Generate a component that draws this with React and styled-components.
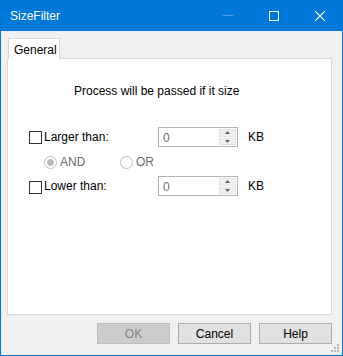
import styled, { createGlobalStyle } from "styled-components";

const Global = createGlobalStyle`
  html, body {
    margin: 0;
    padding: 0;
    background: #f0f0f0;
  }
  * {
    box-sizing: border-box;
  }
`;

const Window = styled.div`
  width: 343px;
  height: 356px;
  display: flex;
  flex-direction: column;
  border: 1px solid #0078d7;
  border-top: none;
  background: #f0f0f0;
  font-family: "Liberation Sans", Arial, sans-serif;
  font-size: 12px;
  color: #000;
  position: relative;
`;

const TitleBar = styled.div`
  height: 31px;
  margin: 0 -1px;
  background: #0078d7;
  color: #fff;
  display: flex;
  align-items: center;
  padding-left: 10px;
`;

const Title = styled.div`
  flex: 1;
  font-size: 12px;
`;

const CaptionButton = styled.div`
  width: 46px;
  height: 31px;
  display: flex;
  align-items: center;
  justify-content: center;
`;

const Body = styled.div`
  flex: 1;
  display: flex;
  flex-direction: column;
  padding: 7px 10px 0 6px;
`;

const TabStrip = styled.div`
  display: flex;
  padding-left: 1px;
  height: 20px;
`;

const Tab = styled.div`
  width: 52px;
  height: 21px;
  background: #fff;
  border: 1px solid #d9d9d9;
  border-bottom: none;
  padding: 4px 0 0 5px;
  position: relative;
  z-index: 1;
`;

const Panel = styled.div`
  height: 257px;
  background: #fff;
  border: 1px solid #d9d9d9;
  padding: 25px 0 0 21px;
`;

const Heading = styled.div`
  padding-left: 45px;
  line-height: 15px;
  margin-bottom: 28px;
`;

const Row = styled.div`
  display: flex;
  align-items: center;
  height: 20px;
  margin-bottom: ${(p) => p.$gap || 0}px;
`;

const CheckLabel = styled.label`
  width: 129px;
  display: flex;
  align-items: center;
  gap: 2px;
`;

const Box = styled.span`
  width: 13px;
  height: 13px;
  border: 1px solid #333;
  background: #fff;
  display: inline-block;
  margin-top: ${(p) => p.$shift || 0}px;
`;

const Spin = styled.div`
  width: 80px;
  height: 20px;
  border: 1px solid #b4b4b4;
  display: flex;
  align-items: stretch;
`;

const SpinValue = styled.div`
  flex: 1;
  padding: 3px 0 0 4px;
  color: #6d6d6d;
`;

const SpinButtons = styled.div`
  width: 17px;
  margin: 1px 1px 1px 0;
  display: flex;
  flex-direction: column;
  gap: 1px;
`;

const SpinArrow = styled.div`
  flex: 1;
  background: #f0f0f0;
  border: 1px solid #e3e3e3;
  display: flex;
  align-items: center;
  justify-content: center;
`;

const Unit = styled.span`
  margin-left: 10px;
`;

const RadioRow = styled.div`
  display: flex;
  align-items: center;
  height: 20px;
  padding-left: 15px;
  margin: 5px 0 4px;
  color: #6d6d6d;
`;

const RadioItem = styled.div`
  display: flex;
  align-items: center;
  gap: 3px;
  width: ${(p) => p.$width || "auto"};
`;

const Radio = styled.span`
  width: 13px;
  height: 13px;
  border-radius: 50%;
  border: 1px solid #bcbcbc;
  background: #fff;
  display: flex;
  align-items: center;
  justify-content: center;
  &::after {
    content: "";
    width: 7px;
    height: 7px;
    border-radius: 50%;
    background: ${(p) => (p.$checked ? "#bcbcbc" : "transparent")};
  }
`;

const Buttons = styled.div`
  display: flex;
  justify-content: flex-end;
  gap: 8px;
  margin-top: 8px;
`;

const Button = styled.div`
  width: 73px;
  height: 21px;
  display: flex;
  align-items: center;
  justify-content: center;
  background: ${(p) => (p.$disabled ? "#cccccc" : "#e1e1e1")};
  border: 1px solid ${(p) => (p.$disabled ? "#bfbfbf" : "#adadad")};
  color: ${(p) => (p.$disabled ? "#838383" : "#000")};
`;

const Grip = styled.svg`
  position: absolute;
  right: 3px;
  bottom: 3px;
`;

const Spinner = () => (
  <Spin>
    <SpinValue>0</SpinValue>
    <SpinButtons>
      <SpinArrow>
        <svg width="5" height="3" viewBox="0 0 5 3">
          <path d="M0 3 L2.5 0 L5 3 Z" fill="#606060" />
        </svg>
      </SpinArrow>
      <SpinArrow>
        <svg width="5" height="3" viewBox="0 0 5 3">
          <path d="M0 0 L2.5 3 L5 0 Z" fill="#606060" />
        </svg>
      </SpinArrow>
    </SpinButtons>
  </Spin>
);

export default function App() {
  return (
    <>
      <Global />
      <Window>
        <TitleBar>
          <Title>SizeFilter</Title>
          <CaptionButton>
            <svg width="10" height="1">
              <rect width="10" height="1" fill="#4da2e8" />
            </svg>
          </CaptionButton>
          <CaptionButton>
            <svg width="10" height="10">
              <rect x="0.5" y="0.5" width="9" height="9" fill="none" stroke="#fff" />
            </svg>
          </CaptionButton>
          <CaptionButton>
            <svg width="10" height="10">
              <path d="M0 0 L10 10 M10 0 L0 10" stroke="#fff" strokeWidth="1.1" />
            </svg>
          </CaptionButton>
        </TitleBar>
        <Body>
          <TabStrip>
            <Tab>General</Tab>
          </TabStrip>
          <Panel>
            <Heading>Process will be passed if it size</Heading>
            <Row>
              <CheckLabel>
                <Box />
                Larger than:
              </CheckLabel>
              <Spinner />
              <Unit>KB</Unit>
            </Row>
            <RadioRow>
              <RadioItem $width="76px">
                <Radio $checked />
                AND
              </RadioItem>
              <RadioItem>
                <Radio />
                OR
              </RadioItem>
            </RadioRow>
            <Row>
              <CheckLabel>
                <Box $shift={3} />
                Lower than:
              </CheckLabel>
              <Spinner />
              <Unit>KB</Unit>
            </Row>
          </Panel>
          <Buttons>
            <Button $disabled>OK</Button>
            <Button>Cancel</Button>
            <Button>Help</Button>
          </Buttons>
        </Body>
        <Grip width="8" height="8" viewBox="0 0 8 8">
          <rect x="6" y="0" width="2" height="2" fill="#b8b8b8" />
          <rect x="3" y="3" width="2" height="2" fill="#b8b8b8" />
          <rect x="6" y="3" width="2" height="2" fill="#b8b8b8" />
          <rect x="0" y="6" width="2" height="2" fill="#b8b8b8" />
          <rect x="3" y="6" width="2" height="2" fill="#b8b8b8" />
          <rect x="6" y="6" width="2" height="2" fill="#b8b8b8" />
        </Grip>
      </Window>
    </>
  );
}
